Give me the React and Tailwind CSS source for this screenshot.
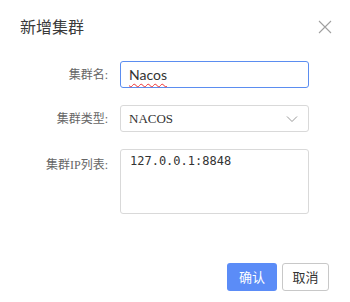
export default function App() {
  const cjk = { fontFamily: '"Liberation Serif", "Noto Sans CJK SC", serif' };
  return (
    <div className="w-[350px] h-[302px] bg-white relative overflow-hidden" style={cjk}>
      <div className="flex items-center justify-between pl-[20px] pr-[18px] pt-[11px] h-[40px]">
        <div className="text-[16px] leading-[20px] text-[#3a3a3a]" style={{ fontFamily: '"Noto Sans CJK SC", sans-serif' }}>新增集群</div>
        <svg width="14" height="14" viewBox="0 0 14 14" className="mt-[2px]">
          <path d="M1 1L13 13M13 1L1 13" stroke="#a0a0a0" strokeWidth="1.1" fill="none" />
        </svg>
      </div>
      <div className="flex flex-col mt-[21px] gap-[17px]">
        <div className="flex items-center">
          <div className="w-[108px] text-right text-[12px] text-[#666]">集群名:</div>
          <div className="ml-[12px] w-[189px] h-[27px] border border-[#5b8df0] rounded-[3px] flex items-center pl-[8px]">
            <span className="text-[14px] text-[#333] underline decoration-wavy decoration-[#e33] decoration-[1px] underline-offset-[3px]" style={{ fontFamily: 'Lato, sans-serif' }}>Nacos</span>
          </div>
        </div>
        <div className="flex items-center">
          <div className="w-[108px] text-right text-[12px] text-[#666]">集群类型:</div>
          <div className="ml-[12px] w-[189px] h-[27px] border border-[#d9d9d9] rounded-[3px] flex items-center justify-between pl-[8px] pr-[10px]">
            <span className="text-[13px] text-[#333]">NACOS</span>
            <svg width="12" height="8" viewBox="0 0 12 8">
              <path d="M1 1.5L6 6.5L11 1.5" stroke="#999" strokeWidth="1" fill="none" />
            </svg>
          </div>
        </div>
        <div className="flex items-start">
          <div className="w-[108px] text-right text-[12px] text-[#666] pt-[7px]">集群IP列表:</div>
          <div className="ml-[12px] w-[189px] h-[65px] border border-[#d9d9d9] rounded-[3px] pl-[9px] pt-[3px] text-[12px] leading-[16px]">
            <span className="text-[12px] text-[#333] leading-[16px]" style={{ fontFamily: '"DejaVu Sans Mono", monospace' }}>127.0.0.1:8848</span>
          </div>
        </div>
      </div>
      <div className="flex justify-end gap-[5px] pr-[21px] mt-[49px]" style={{ fontFamily: '"Noto Sans CJK SC", sans-serif' }}>
        <div className="w-[50px] h-[28px] rounded-[3px] bg-[#5b8cf7] text-white text-[13px] flex items-center justify-center">确认</div>
        <div className="w-[47px] h-[28px] rounded-[3px] border border-[#c8c8c8] bg-white text-[#333] text-[13px] flex items-center justify-center">取消</div>
      </div>
    </div>
  );
}
